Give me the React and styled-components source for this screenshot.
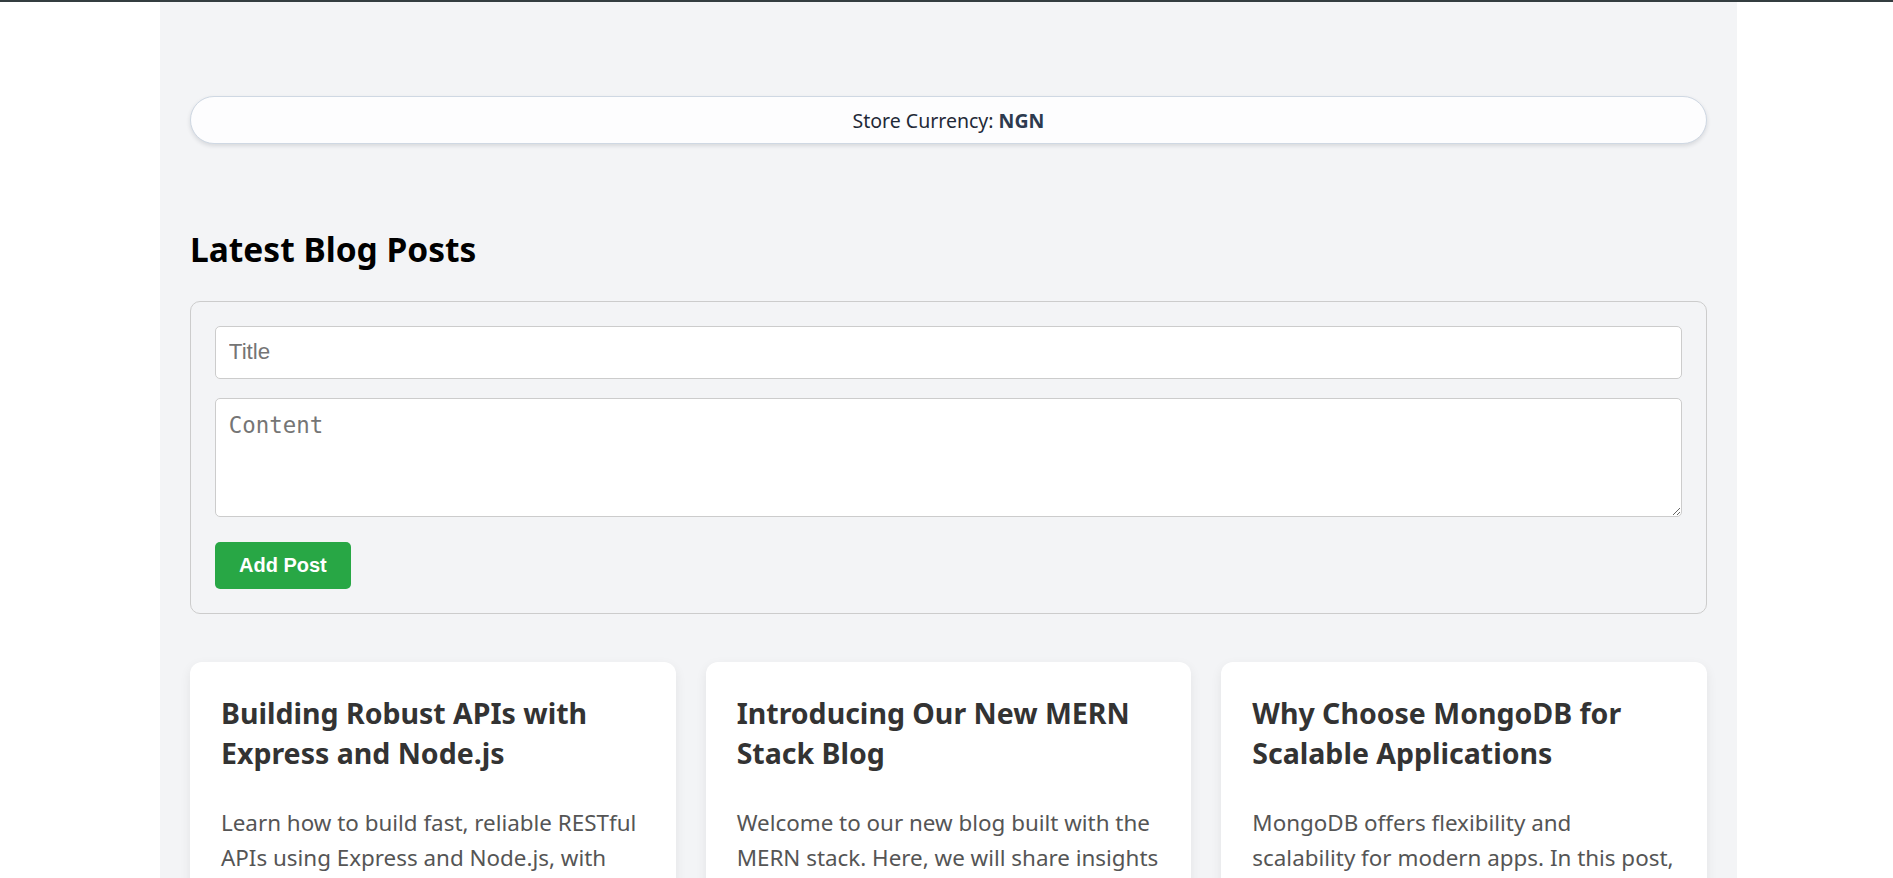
import React, { useState } from 'react'
import styled, { createGlobalStyle } from 'styled-components'

const GlobalStyle = createGlobalStyle`
  body {
    margin: 0;
    background: #ffffff;
    font-family: "Noto Sans", "Open Sans", sans-serif;
  }
`

const posts = [
  {
    id: 1,
    title: 'Building Robust APIs with Express and Node.js',
    content: 'Learn how to build fast, reliable RESTful APIs using Express and Node.js, with practical examples of routing, middleware, validation and error handling.'
  },
  {
    id: 2,
    title: 'Introducing Our New MERN Stack Blog',
    content: 'Welcome to our new blog built with the MERN stack. Here, we will share insights and tutorials on MongoDB, Express, React and Node.js.'
  },
  {
    id: 3,
    title: 'Why Choose MongoDB for Scalable Applications',
    content: 'MongoDB offers flexibility and scalability for modern apps. In this post, we explore its key features and why it is a great fit for your next project.'
  }
]

const App = () => {
  const [title, setTitle] = useState('')
  const [content, setContent] = useState('')

  return (
    <>
      <GlobalStyle />
      <TopBar />
      <Page>
        <CurrencyPill>
          Store Currency:&nbsp;<Code>NGN</Code>
        </CurrencyPill>

        <Heading>Latest Blog Posts</Heading>

        <PostForm onSubmit={e => e.preventDefault()}>
          <TitleInput
            type='text'
            placeholder='Title'
            value={title}
            onChange={e => setTitle(e.target.value)}
          />
          <ContentInput
            placeholder='Content'
            value={content}
            onChange={e => setContent(e.target.value)}
          />
          <AddButton type='submit'>Add Post</AddButton>
        </PostForm>

        <PostGrid>
          {posts.map(post => (
            <PostCard key={post.id}>
              <PostTitle>{post.title}</PostTitle>
              <PostBody>{post.content}</PostBody>
            </PostCard>
          ))}
        </PostGrid>
      </Page>
    </>
  )
}

const TopBar = styled.div`
  height: 2px;
  background: #343d40;
`

const Page = styled.main`
  box-sizing: border-box;
  width: 1577px;
  margin-left: 160px;
  min-height: calc(100vh - 2px);
  padding: 94px 30px 40px;
  background: #f3f4f6;
`

const CurrencyPill = styled.div`
  box-sizing: border-box;
  height: 48px;
  display: flex;
  align-items: center;
  justify-content: center;
  background: #fdfdfe;
  border: 1px solid #cfd8e3;
  border-radius: 9999px;
  box-shadow: 0 2px 4px rgba(15, 23, 42, 0.12);
  font-size: 19.5px;
  color: #1f2937;
`

const Code = styled.strong`
  color: #2d3a4f;
  font-weight: 700;
`

const Heading = styled.h2`
  margin: 89px 0 34px;
  font-size: 33.5px;
  line-height: 1;
  font-weight: 700;
  color: #000;
`

const PostForm = styled.form`
  display: flex;
  flex-direction: column;
  align-items: flex-start;
  padding: 24px;
  border: 1px solid #cccccc;
  border-radius: 10px;
`

const fieldStyles = `
  box-sizing: border-box;
  width: 100%;
  padding: 12.8px;
  border: 1px solid #cccccc;
  border-radius: 5px;
  background: #fff;
  font-size: 22.4px;
  color: #222;
  &::placeholder { color: #757575; }
  &:focus { outline: none; border-color: #28a745; }
`

const TitleInput = styled.input`
  ${fieldStyles}
  font-family: "Liberation Sans", Arial, sans-serif;
  margin-bottom: 19px;
`

const ContentInput = styled.textarea`
  ${fieldStyles}
  display: block;
  height: 119px;
  font-family: "DejaVu Sans Mono", "Liberation Mono", monospace;
  resize: vertical;
`

const AddButton = styled.button`
  margin-top: 25px;
  padding: 12px 24px;
  border: none;
  border-radius: 5px;
  background: #28a745;
  color: #fff;
  font-family: "Liberation Sans", Arial, sans-serif;
  font-size: 20px;
  font-weight: 700;
  cursor: pointer;
`

const PostGrid = styled.section`
  display: grid;
  grid-template-columns: repeat(3, 1fr);
  gap: 30px;
  margin-top: 48px;
`

const PostCard = styled.article`
  padding: 31px;
  background: #fff;
  border-radius: 12px;
  box-shadow: 0 4px 12px rgba(0, 0, 0, 0.07);
`

const PostTitle = styled.h3`
  margin: 0 0 32px;
  font-size: 28.5px;
  line-height: 40px;
  font-weight: 700;
  color: #333;
`

const PostBody = styled.p`
  margin: 0;
  font-size: 22.4px;
  line-height: 35px;
  color: #555;
`

export default App
